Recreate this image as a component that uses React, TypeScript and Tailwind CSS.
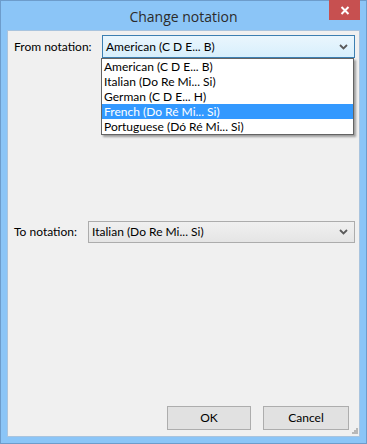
import React from "react";

const font = { fontFamily: '"Lato", "Liberation Sans", sans-serif' };

function Chevron() {
  return (
    <svg width="9" height="6" viewBox="0 0 9 6" className="shrink-0">
      <path d="M1 1 L4.5 4.5 L8 1" stroke="#5a5a5a" strokeWidth="1.8" fill="none" />
    </svg>
  );
}

export default function App() {
  const items = [
    "American (C D E... B)",
    "Italian (Do Re Mi... Si)",
    "German (C D E... H)",
    "French (Do Ré Mi... Si)",
    "Portuguese (Dó Ré Mi... Si)",
  ];
  return (
    <div
      className="w-[367px] h-[444px] bg-[#8bc5f7] border border-[#6d9ccb] flex flex-col relative text-[12px] text-black"
      style={font}
    >
      <div className="h-[29px] flex items-center justify-center shrink-0 relative">
        <span className="text-[14px] text-[#2b2b2b] mt-[1px]" style={{ fontFamily: '"Open Sans", "Noto Sans", sans-serif' }}>
          Change notation
        </span>
        <div className="absolute top-[-1px] right-[6px] w-[31px] h-[20px] bg-[#c75050] flex items-center justify-center">
          <svg width="10" height="9" viewBox="0 0 10 9">
            <path d="M1.5 1 L8.5 8 M8.5 1 L1.5 8" stroke="#ffffff" strokeWidth="2" />
          </svg>
        </div>
      </div>
      <div className="flex-1 mx-[6px] mb-[6px] bg-[#f0f0f0] border border-[#a9c4de] flex flex-col relative">
        <div className="flex items-start pl-[6px] pt-[4px]">
          <span className="w-[88px] pt-[3px]">From notation:</span>
          <div className="w-[253px] h-[23px] border border-[#3c7fb1] bg-gradient-to-b from-[#eaf6fd] to-[#d7effc] flex items-center justify-between pl-[3px] pr-[6px]">
            <span>American (C D E... B)</span>
            <Chevron />
          </div>
        </div>
        <div className="absolute left-[93px] top-[27px] w-[253px] bg-white border border-[#646464] shadow-[2px_2px_2px_rgba(0,0,0,0.35)]">
          {items.map((t) => (
            <div
              key={t}
              className={
                "h-[15px] leading-[15px] pl-[2px] " +
                (t.startsWith("French") ? "bg-[#3399ff] text-white" : "")
              }
            >
              {t}
            </div>
          ))}
        </div>
        <div className="flex items-center pl-[6px] mt-[163px]">
          <span className="w-[74px]">To notation:</span>
          <div className="w-[267px] h-[22px] border border-[#acacac] bg-gradient-to-b from-[#f0f0f0] to-[#e5e5e5] flex items-center justify-between pl-[3px] pr-[6px]">
            <span>Italian (Do Re Mi... Si)</span>
            <Chevron />
          </div>
        </div>
        <div className="mt-auto flex justify-end gap-[12px] pr-[10px] pb-[6px] relative">
          <button className="w-[84px] h-[24px] bg-[#e1e1e1] border border-[#adadad] text-[12px]" style={font}>
            OK
          </button>
          <button className="w-[86px] h-[24px] bg-[#e1e1e1] border border-[#adadad] text-[12px]" style={font}>
            Cancel
          </button>
          <svg className="absolute right-[1px] bottom-[2px]" width="6" height="6" viewBox="0 0 6 6">
            <rect x="4" y="0" width="2" height="2" fill="#b8b8b8" />
            <rect x="2" y="2" width="2" height="2" fill="#b8b8b8" />
            <rect x="4" y="2" width="2" height="2" fill="#b8b8b8" />
            <rect x="0" y="4" width="2" height="2" fill="#b8b8b8" />
            <rect x="2" y="4" width="2" height="2" fill="#b8b8b8" />
            <rect x="4" y="4" width="2" height="2" fill="#b8b8b8" />
          </svg>
        </div>
      </div>
    </div>
  );
}
